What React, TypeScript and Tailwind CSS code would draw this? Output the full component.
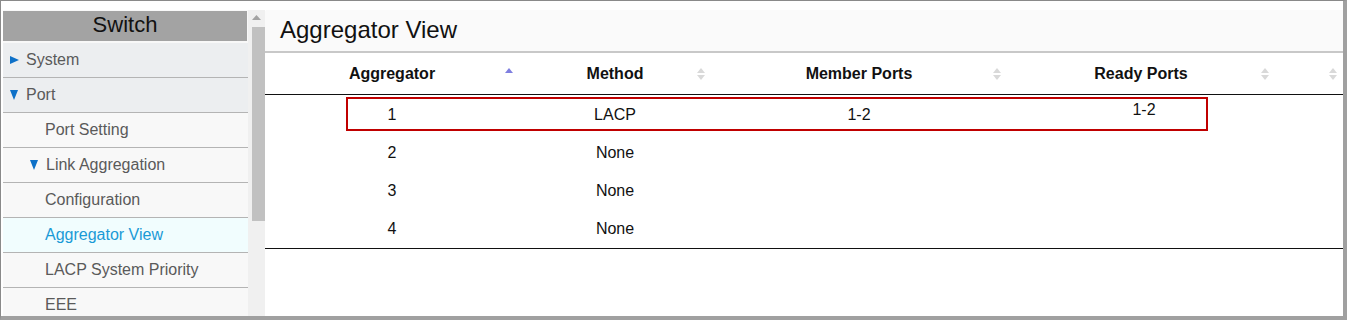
import React from "react";

const NAV = [
  { label: "System", level: 0, icon: "right" },
  { label: "Port", level: 0, icon: "down" },
  { label: "Port Setting", level: 1 },
  { label: "Link Aggregation", level: 1, icon: "down" },
  { label: "Configuration", level: 1 },
  { label: "Aggregator View", level: 1, active: true },
  { label: "LACP System Priority", level: 1 },
  { label: "EEE", level: 1 },
];

const COLUMNS = [
  { label: "Aggregator", sort: "asc" },
  { label: "Method", sort: "none" },
  { label: "Member Ports", sort: "none" },
  { label: "Ready Ports", sort: "none" },
  { label: "", sort: "none" },
];

const ROWS = [
  { id: "1", method: "LACP", member: "1-2", ready: "1-2" },
  { id: "2", method: "None", member: "", ready: "" },
  { id: "3", method: "None", member: "", ready: "" },
  { id: "4", method: "None", member: "", ready: "" },
];

function SortIcon({ sort }: { sort: string }) {
  if (sort === "asc") {
    return (
      <svg width="8" height="6" viewBox="0 0 8 6" className="absolute right-[6px] top-[15px]">
        <polygon points="4,0 8,5 0,5" fill="#7f7fe0" />
      </svg>
    );
  }
  return (
    <svg width="8" height="12" viewBox="0 0 8 12" className="absolute right-[6px] top-[15px]">
      <polygon points="4,0 8,5 0,5" fill="#d9d9d9" />
      <polygon points="0,7 8,7 4,12" fill="#d9d9d9" />
    </svg>
  );
}

function NavIcon({ icon }: { icon?: string }) {
  if (icon === "right") {
    return (
      <svg width="9" height="8" viewBox="0 0 9 8" className="mr-[7px]">
        <polygon points="0,0 9,4 0,8" fill="#0e71c8" />
      </svg>
    );
  }
  if (icon === "down") {
    return (
      <svg width="8" height="10" viewBox="0 0 8 10" className="mr-[8px]">
        <polygon points="0,0 8,0 4,10" fill="#0e71c8" />
      </svg>
    );
  }
  return null;
}

export default function App() {
  return (
    <div className="w-[1347px] h-[320px] bg-white border-t border-l border-[#8a8a8a] border-r-4 border-b-4 border-r-[#a0a0a0] border-b-[#a0a0a0] flex flex-col pt-[9px] pl-[2px] overflow-hidden font-['Liberation_Sans',Arial,sans-serif]">
      <div className="flex flex-1 min-h-0">
        {/* Sidebar */}
        <div className="w-[245px] flex flex-col pt-[1px] bg-[#f8f8f8]">
          <div className="h-[30px] bg-[#a3a3a3] mr-[1px] mb-[2px] flex items-center justify-center pb-[4px] text-[22px] text-[#111]">
            Switch
          </div>
          {NAV.map((item) => (
            <div
              key={item.label}
              className={`h-[35px] shrink-0 flex items-center border-b border-[#b4b4b4] text-[16px] ${
                item.active
                  ? "bg-[#f1fdfe] text-[#1a9ad6]"
                  : item.level === 0
                  ? "bg-[#eceef0] text-[#5a5a5a]"
                  : "bg-[#f8f8f8] text-[#5a5a5a]"
              } ${item.level === 0 ? "pl-[7px]" : item.icon ? "pl-[27px]" : "pl-[42px]"}`}
            >
              <NavIcon icon={item.icon} />
              {item.label}
            </div>
          ))}
        </div>

        {/* Scrollbar */}
        <div className="w-[17px] bg-[#f0f0f0] flex flex-col items-center">
          <svg width="9" height="6" viewBox="0 0 9 6" className="mt-[5px]">
            <polygon points="4.5,0 9,5 0,5" fill="#a3a3a3" />
          </svg>
          <div className="w-[13px] h-[194px] bg-[#c1c1c1] mt-[6px] ml-[3px]" />
        </div>

        {/* Main */}
        <div className="flex-1 flex flex-col">
          <div className="h-[43px] bg-[#fafafa] border-b-2 border-[#c8c8c8] rounded-tl-[2px] flex items-center pl-[15px] pb-[2px] text-[24px] text-[#111]">
            Aggregator View
          </div>
          <div className="relative">
            <div className="grid grid-cols-[254px_192px_296px_268px_1fr] h-[42px] border-b border-[#111]">
              {COLUMNS.map((col, i) => (
                <div key={i} className="relative flex items-center justify-center text-[16px] font-bold text-[#111] pt-[1px]">
                  {col.label}
                  <SortIcon sort={col.sort} />
                </div>
              ))}
            </div>
            <div className="relative border-b border-[#111] pt-[1px]">
              {ROWS.map((row) => (
                <div key={row.id} className="grid grid-cols-[254px_192px_296px_268px_1fr] h-[38px] text-[16px] text-[#111]">
                  <div className="flex items-center justify-center">{row.id}</div>
                  <div className="flex items-center justify-center">{row.method}</div>
                  <div className="flex items-center justify-center">{row.member}</div>
                  <div className="flex items-center justify-center pl-[6px] pb-[10px]">{row.ready}</div>
                  <div />
                </div>
              ))}
              <div className="absolute left-[81px] top-[2px] w-[862px] h-[34px] border-2 border-[#c00000]" />
            </div>
          </div>
        </div>
      </div>
    </div>
  );
}
